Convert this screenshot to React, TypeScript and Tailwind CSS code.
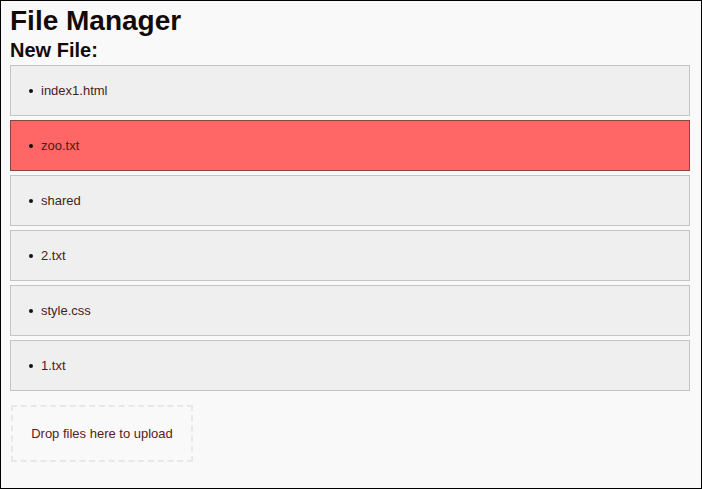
import React from "react";

const files = ["index1.html", "zoo.txt", "shared", "2.txt", "style.css", "1.txt"];

export default function App() {
  return (
    <div
      className="w-[702px] h-[489px] bg-[#f9f9f9] border border-black box-border overflow-hidden pl-[9px] pr-[11px] pt-[4px] text-[#1a1010]"
      style={{ fontFamily: '"Liberation Sans", Arial, sans-serif' }}
    >
      <h1 className="text-[28px] font-bold leading-[32px] text-[#140a0a]">File Manager</h1>
      <h2 className="text-[20px] font-bold leading-[24px] text-[#140a0a] mt-[1px]">New File:</h2>
      <div className="flex flex-col gap-[4px] mt-[3px]">
        {files.map((f, i) => (
          <div
            key={f}
            className={
              i === 1
                ? "h-[51px] border border-[#8a4545] bg-[#ff6666] flex items-center pl-[18px]"
                : "h-[51px] border border-[#c4c4c4] bg-[#efefef] flex items-center pl-[18px]"
            }
          >
            <span className="w-[4px] h-[4px] rounded-full bg-[#111] mr-[8px]" />
            <span className="text-[13px] text-[#4a1c1c]">{f}</span>
          </div>
        ))}
      </div>
      <div className="mt-[14px] ml-[1px] w-[182px] h-[57px] border-2 border-dashed border-[#e8e8e8] flex items-center justify-center">
        <span className="text-[13px] text-[#5a2020]">Drop files here to upload</span>
      </div>
    </div>
  );
}
